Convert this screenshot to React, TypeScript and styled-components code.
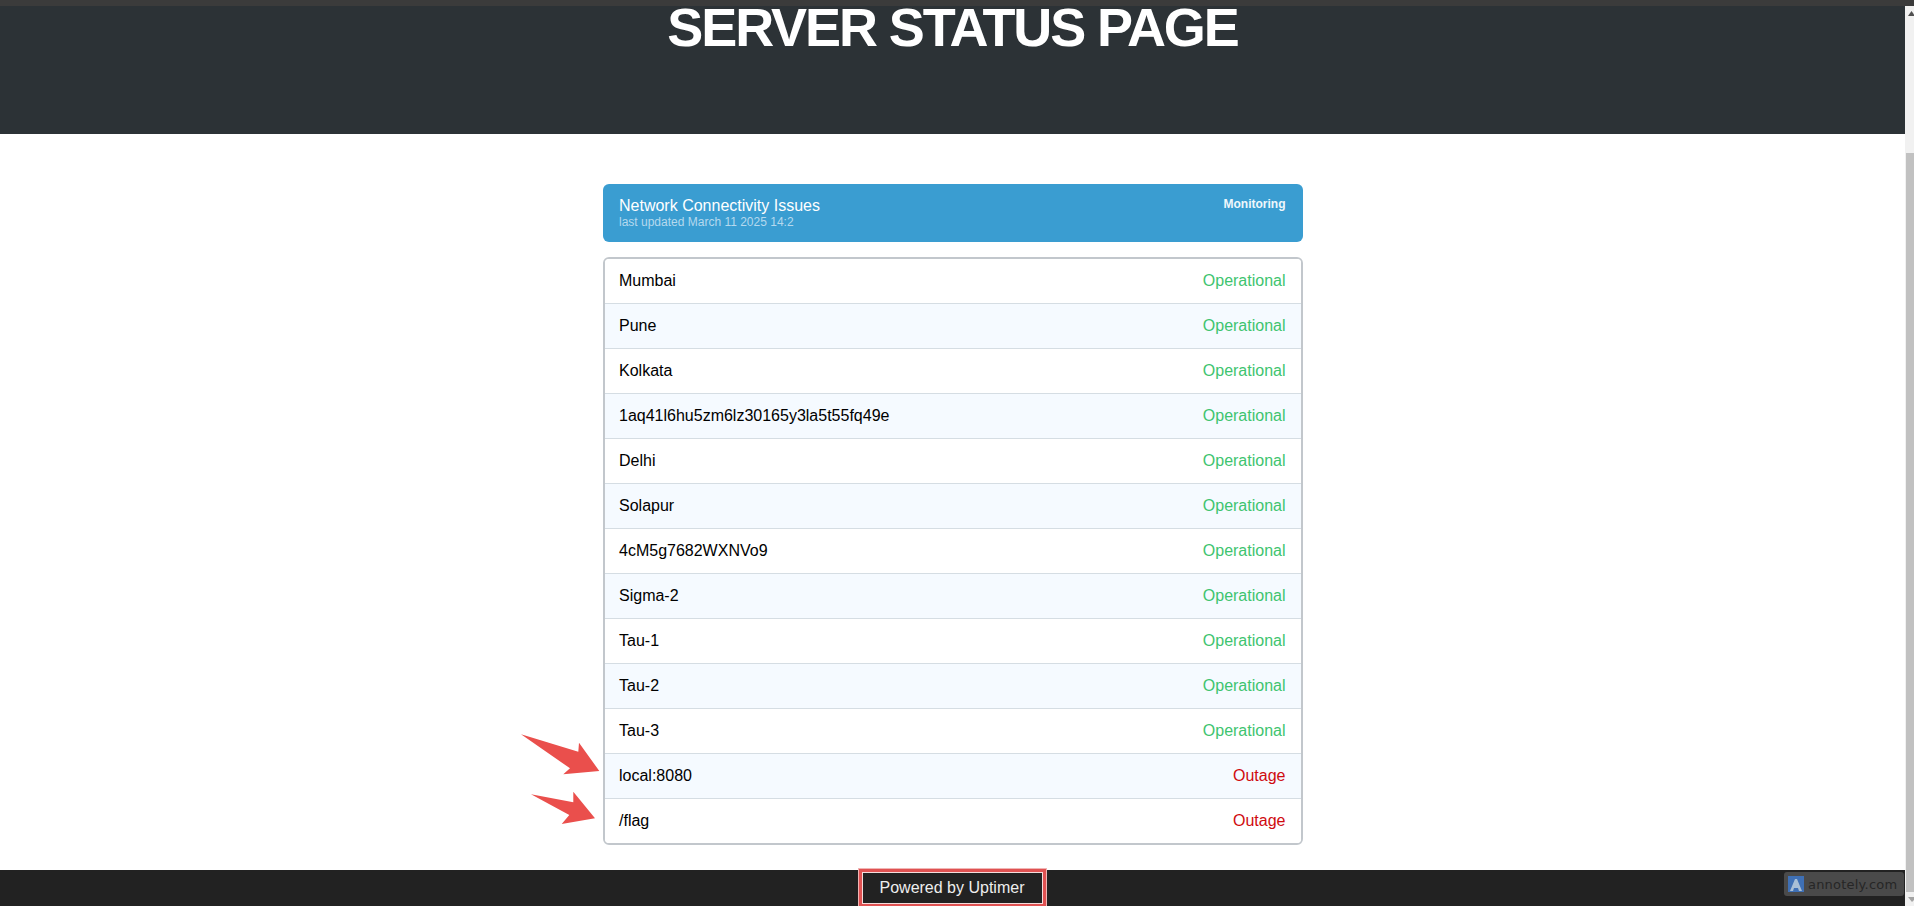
import React from 'react'
import styled, { createGlobalStyle } from 'styled-components'

const GlobalStyle = createGlobalStyle`
  html, body {
    margin: 0;
    padding: 0;
    height: 906px;
    overflow: hidden;
    background: #ffffff;
    font-family: "Liberation Sans", Arial, sans-serif;
  }
`

const Shell = styled.div`
  display: flex;
  flex-direction: column;
  position: relative;
  height: 906px;
  overflow: hidden;
`

const BrowserEdge = styled.div`
  height: 6px;
  flex: none;
  background: #3b3b3b;
`

const Viewport = styled.div`
  flex: 1;
  display: flex;
  min-height: 0;
`

const Page = styled.div`
  flex: 1;
  display: flex;
  flex-direction: column;
  min-width: 0;
`

const Header = styled.header`
  height: 128px;
  flex: none;
  background: #2c3236;
  text-align: center;
`

const Title = styled.h1`
  margin: 0;
  color: #ffffff;
  font-size: 54px;
  line-height: 42px;
  font-weight: 700;
  letter-spacing: -2.1px;
`

const Main = styled.main`
  flex: 1;
  width: 701px;
  margin: 0 auto;
  padding: 50px 0 0 1px;
  box-sizing: border-box;
`

const Notice = styled.section`
  display: flex;
  justify-content: space-between;
  height: 58px;
  box-sizing: border-box;
  padding: 13px 17.5px 0 16px;
  background: #3a9dd1;
  border-radius: 6px;
  color: #ffffff;
`

const NoticeTitle = styled.div`
  font-size: 16px;
  line-height: 18px;
`

const NoticeMeta = styled.div`
  font-size: 12px;
  line-height: 14px;
  color: #b5d9ee;
`

const NoticeState = styled.div`
  font-size: 12px;
  line-height: 14px;
  font-weight: 700;
  color: #eef7fc;
`

const ServerList = styled.ul`
  list-style: none;
  margin: 15px 0 0;
  padding: 0;
  border: 2px solid #c2c7cc;
  border-radius: 6px;
  overflow: hidden;
`

const ServerRow = styled.li<{ $shaded: boolean }>`
  display: flex;
  align-items: center;
  justify-content: space-between;
  height: 44px;
  padding: 0 15.5px 0 14px;
  background: ${props => (props.$shaded ? '#f5faff' : '#ffffff')};
  font-size: 16px;
  color: #000000;

  & + & {
    border-top: 1px solid #d5dde3;
  }
`

const ServerState = styled.span<{ $down: boolean }>`
  color: ${props => (props.$down ? '#cf0a0f' : '#3ec46f')};
`

const Footer = styled.footer`
  height: 36px;
  flex: none;
  display: flex;
  justify-content: center;
  align-items: flex-start;
  background: #222222;
`

const PoweredBy = styled.div`
  width: 181px;
  height: 32px;
  margin: 2px 1px 0 0;
  box-sizing: border-box;
  display: flex;
  align-items: center;
  justify-content: center;
  border: 1px solid #f5dcdc;
  box-shadow: 0 0 0 3px #e05252, 0 0 0 4px #f0b5b5;
  color: #eeeeee;
  font-size: 16px;
`

const Scrollbar = styled.div`
  width: 9px;
  flex: none;
  display: flex;
  flex-direction: column;
  align-items: flex-end;
  background: #f1f1f1;
`

const ScrollArrow = styled.svg`
  flex: none;
  display: block;
`

const ScrollSpacer = styled.div`
  height: 136px;
  flex: none;
`

const ScrollThumb = styled.div`
  flex: 1;
  width: 8px;
  background: #c1c1c1;
`

const Arrows = styled.svg`
  position: absolute;
  left: 515px;
  top: 730px;
`

const Badge = styled.div`
  position: absolute;
  right: 10px;
  bottom: 10px;
  width: 120px;
  height: 24px;
  box-sizing: border-box;
  display: flex;
  align-items: center;
  gap: 4px;
  padding-left: 4px;
  border-radius: 3px;
  background: #4a4a4a;
  color: #262626;
  font-family: "DejaVu Sans", sans-serif;
  font-size: 13px;
  letter-spacing: 0.2px;
`

const servers = [
  ['Mumbai', 0],
  ['Pune', 0],
  ['Kolkata', 0],
  ['1aq41l6hu5zm6lz30165y3la5t55fq49e', 0],
  ['Delhi', 0],
  ['Solapur', 0],
  ['4cM5g7682WXNVo9', 0],
  ['Sigma-2', 0],
  ['Tau-1', 0],
  ['Tau-2', 0],
  ['Tau-3', 0],
  ['local:8080', 1],
  ['/flag', 1],
] as const

export default function App() {
  return (
    <Shell>
      <GlobalStyle />
      <BrowserEdge />
      <Viewport>
        <Page>
          <Header>
            <Title>SERVER STATUS PAGE</Title>
          </Header>
          <Main>
            <Notice>
              <div>
                <NoticeTitle>Network Connectivity Issues</NoticeTitle>
                <NoticeMeta>last updated March 11 2025 14:2</NoticeMeta>
              </div>
              <NoticeState>Monitoring</NoticeState>
            </Notice>
            <ServerList>
              {servers.map(([name, down], i) => (
                <ServerRow key={name} $shaded={i % 2 === 1}>
                  <span>{name}</span>
                  <ServerState $down={down === 1}>{down ? 'Outage' : 'Operational'}</ServerState>
                </ServerRow>
              ))}
            </ServerList>
          </Main>
          <Footer>
            <PoweredBy>Powered by Uptimer</PoweredBy>
          </Footer>
        </Page>
        <Scrollbar>
          <ScrollArrow width="9" height="11" viewBox="0 0 9 11">
            <polygon points="3,10 6.5,5 9,8.5 9,10" fill="#505050" />
          </ScrollArrow>
          <ScrollSpacer />
          <ScrollThumb />
          <ScrollArrow width="9" height="14" viewBox="0 0 9 14">
            <polygon points="3,5 9,5 9,8 7,10" fill="#a3a3a3" />
          </ScrollArrow>
        </Scrollbar>
      </Viewport>
      {/* annotation arrows, coordinates relative to the svg box */}
      <Arrows width="90" height="100" viewBox="0 0 90 100">
        <polygon fill="#ea4f4c" points="6,4.3 63.3,21.7 64,12.7 84.3,41 48.3,44.3 55,38.3" />
        <polygon fill="#ea4f4c" points="16,64.3 58.3,72.3 58.3,61.7 80,88.3 46.7,94 54.3,85" />
      </Arrows>
      <Badge>
        <svg width="16" height="16" viewBox="0 0 16 16">
          <rect width="16" height="16" fill="#3f70b5" />
          <path d="M2 15 L7 3 H9 L14 15 H11 L10 12 H6 L5 15 Z" fill="#a9bfd6" />
        </svg>
        annotely.com
      </Badge>
    </Shell>
  )
}
